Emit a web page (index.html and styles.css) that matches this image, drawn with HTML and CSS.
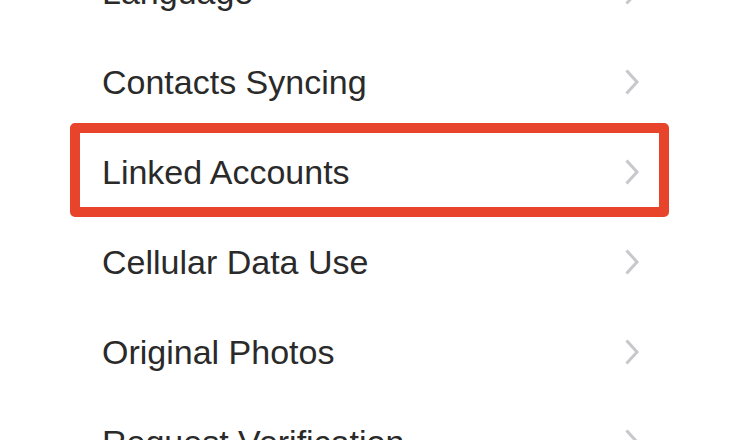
FILE: index.html
```html
<!DOCTYPE html>
<html>
<head>
<meta charset="utf-8">
<link rel="stylesheet" href="styles.css">
</head>
<body>
<ul class="list">
  <li class="row"><span class="label">Language</span><svg class="chev" viewBox="0 0 14 26" width="14" height="26"><path d="M2.5 2.5 L12 13 L2.5 23.5"/></svg></li>
  <li class="row"><span class="label">Contacts Syncing</span><svg class="chev" viewBox="0 0 14 26" width="14" height="26"><path d="M2.5 2.5 L12 13 L2.5 23.5"/></svg></li>
  <li class="row row-hl"><span class="label">Linked Accounts</span><svg class="chev" viewBox="0 0 14 26" width="14" height="26"><path d="M2.5 2.5 L12 13 L2.5 23.5"/></svg><div class="highlight"></div></li>
  <li class="row"><span class="label">Cellular Data Use</span><svg class="chev" viewBox="0 0 14 26" width="14" height="26"><path d="M2.5 2.5 L12 13 L2.5 23.5"/></svg></li>
  <li class="row"><span class="label">Original Photos</span><svg class="chev" viewBox="0 0 14 26" width="14" height="26"><path d="M2.5 2.5 L12 13 L2.5 23.5"/></svg></li>
  <li class="row"><span class="label">Request Verification</span><svg class="chev" viewBox="0 0 14 26" width="14" height="26"><path d="M2.5 2.5 L12 13 L2.5 23.5"/></svg></li>
</ul>
</body>
</html>
```
FILE: styles.css
```css
html, body {
  margin: 0;
  padding: 0;
  background: #ffffff;
  overflow: hidden;
  width: 736px;
  height: 440px;
}
.list {
  list-style: none;
  margin: -55px 0 0 0;
  padding: 0;
  font-family: "Liberation Sans", Arial, sans-serif;
}
.row {
  position: relative;
  height: 90px;
  display: flex;
  align-items: center;
  justify-content: space-between;
  padding: 0 97px 0 102px;
}
.label {
  font-size: 34px;
  color: #2a2a2a;
  margin-top: 5px;
}
.chev {
  display: block;
  margin-top: 3px;
}
.chev path {
  fill: none;
  stroke: #c7c7cc;
  stroke-width: 3;
  stroke-linecap: square;
}
.highlight {
  position: absolute;
  left: 70px;
  top: -2px;
  width: 599px;
  height: 94px;
  box-sizing: border-box;
  border: 10px solid #e8432b;
  border-radius: 5px;
}
```
